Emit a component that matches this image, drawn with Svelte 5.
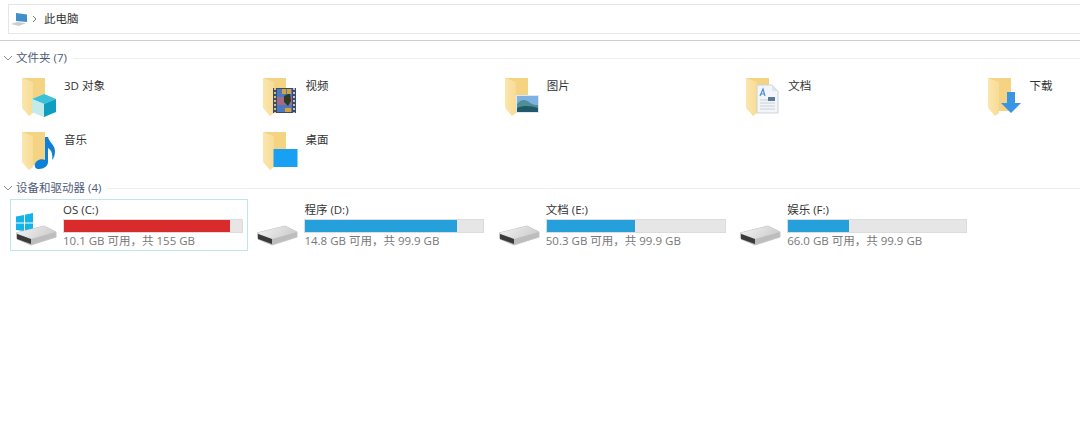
<script>
  const folders = [
    { name: "3D 对象", badge: "cube" },
    { name: "视频", badge: "film" },
    { name: "图片", badge: "photo" },
    { name: "文档", badge: "doc" },
    { name: "下载", badge: "down" },
    { name: "音乐", badge: "note" },
    { name: "桌面", badge: "desk" }
  ];

  const drives = [
    { name: "OS (C:)", free: "10.1 GB 可用，共 155 GB", used: 93.5, low: true, system: true },
    { name: "程序 (D:)", free: "14.8 GB 可用，共 99.9 GB", used: 85.2 },
    { name: "文档 (E:)", free: "50.3 GB 可用，共 99.9 GB", used: 49.6 },
    { name: "娱乐 (F:)", free: "66.0 GB 可用，共 99.9 GB", used: 33.9 }
  ];
</script>

{#snippet chevron()}
  <svg class="chevron" width="10" height="7" viewBox="0 0 10 7">
    <path d="M1 1l4 4 4-4" fill="none" stroke="#8a8f98" stroke-width="1" />
  </svg>
{/snippet}

{#snippet folderIcon(badge)}
  <svg class="folder" width="42" height="47" viewBox="0 0 42 47">
    <defs>
      <linearGradient id="leaf" x1="0" y1="0" x2="1" y2="0">
        <stop offset="0" stop-color="#fbe6ae" />
        <stop offset="1" stop-color="#f8dc96" />
      </linearGradient>
    </defs>
    <g transform="translate(0 4)">
      <path d="M0 1H23V34H6L0 30Z" fill="#f4d382" />
      <path d="M0 1L11 5V36L7 39 0 31Z" fill="url(#leaf)" />

      {#if badge === "cube"}
        <path d="M22 17l12 5v13l-12 5-12-5V22Z" fill="#d5f0ee" />
        <path d="M10 22l12-5 12 5-12 5Z" fill="#3cc2d8" />
        <path d="M22 27l12-5v13l-12 5Z" fill="#0f9dc0" />
        <path d="M10 22l12 5v13l-12-5Z" fill="#c4ebe8" />
      {:else if badge === "film"}
        <rect x="10" y="11" width="23" height="25" fill="#3d4a63" />
        <rect x="14" y="12" width="15" height="23" fill="#4a7ac4" />
        <rect x="14" y="20" width="15" height="8" fill="#a36a88" />
        <path d="M21 19l6-3 1 8-3 5-4-4Z" fill="#2c3a24" />
        <rect x="19" y="12" width="4" height="5" fill="#d9a13b" />
        <rect x="24" y="12" width="4" height="5" fill="#d9a13b" />
        <rect x="22" y="31" width="6" height="4" fill="#d9a13b" />
        <path d="M12 11v25" stroke="#d5c27c" stroke-width="2" stroke-dasharray="2 2" />
        <path d="M31 11v25" stroke="#b9c4d8" stroke-width="2" stroke-dasharray="2 2" />
      {:else if badge === "photo"}
        <rect x="11" y="18" width="23" height="18" fill="#dfe8ef" />
        <rect x="12" y="19" width="21" height="16" fill="#7fb2e4" />
        <path d="M12 27c4-5 8-5 12-2s6 3 9 3v7H12Z" fill="#4f8f94" />
        <path d="M12 31c7-3 14-2 21 0v4H12Z" fill="#21586a" />
      {:else if badge === "doc"}
        <path d="M11 8h15l6 6v22H11Z" fill="#f3f5f9" stroke="#ccd2db" stroke-width="1" />
        <path d="M26 8v6h6Z" fill="#dfe3ea" />
        <path d="M14 19l3-7 2 7M15 17h3" fill="none" stroke="#4a8fd6" stroke-width="1.200" />
        <path d="M14 23h15M14 26h15M14 29h15M14 32h15" stroke="#c9d0da" stroke-width="1" />
        <rect x="22" y="20" width="7" height="4" fill="#5a7a96" />
      {:else if badge === "down"}
        <path d="M19 15h8v11h6L23 36 13 26h6Z" fill="#3a96e2" />
      {:else if badge === "note"}
        <path d="M23 6h3c1 5 7 8 7 14 0 4-1 7-3 9 1-4 0-10-4-12V31c0 4-4 7-9 7-3 0-5-2-4-5 1-4 7-6 10-4Z" fill="#0f80d8" />
      {:else if badge === "desk"}
        <rect x="10.500" y="18" width="24" height="18" fill="#1aa0f2" />
      {/if}
    </g>
  </svg>
{/snippet}

{#snippet driveIcon(system)}
  <svg class="disk" width="42" height="42" viewBox="0 0 42 42">
    <defs>
      <linearGradient id="top" x1="0" y1="0" x2="1" y2="0.300">
        <stop offset="0" stop-color="#f4f4f4" />
        <stop offset="1" stop-color="#cfcfcf" />
      </linearGradient>
    </defs>
    {#if system}
      <path d="M0 10.500l8-1.500v7.500H0Z M9 8.800L17 7v9.500H9Z M0 17.500h8V25L0 24Z M9 17.500h8V27L9 25.200Z" fill="#14b4ea" />
    {/if}
    <path d="M0 27L28 20l12 6v5L15 39 1 33Z" fill="#bdbdbd" stroke="#c4c4c4" stroke-width="1" stroke-linejoin="round" />
    <path d="M0 27L28 20l12 6-25 7Z" fill="url(#top)" />
    <path d="M1 28l14 5v5L1 33Z" fill="#3a3a3a" />
  </svg>
{/snippet}

<div class="explorer">
  <div class="address">
    <svg class="pc" width="16" height="13" viewBox="0 0 16 13">
      <path d="M5 0l11 1.500V9L5 8Z" fill="#3f8fc8" />
      <path d="M0 11l6-2 9 1-7 3Z" fill="#c9ced3" />
    </svg>
    <svg class="crumb" width="5" height="8" viewBox="0 0 5 8">
      <path d="M1 1l3 3-3 3" fill="none" stroke="#777" stroke-width="1" />
    </svg>
    <span>此电脑</span>
  </div>

  <div class="rule"></div>

  <div class="group-head first">
    {@render chevron()}
    <span>文件夹 (7)</span>
    <i></i>
  </div>
  <div class="folders">
    {#each folders as f}
      <div class="folder-item">
        {@render folderIcon(f.badge)}
        <span>{f.name}</span>
      </div>
    {/each}
  </div>

  <div class="group-head">
    {@render chevron()}
    <span>设备和驱动器 (4)</span>
    <i></i>
  </div>
  <div class="drives">
    {#each drives as d}
      <div class="drive" class:selected={d.system}>
        {@render driveIcon(d.system)}
        <div class="info">
          <div class="name">{d.name}</div>
          <div class="bar">
            <div class="fill" class:low={d.low} style="width: {d.used}%"></div>
          </div>
          <div class="free">{d.free}</div>
        </div>
      </div>
    {/each}
  </div>
</div>

<style>
  :global(body) {
    background: #fff;
  }

  .explorer {
    height: 421px;
    overflow: hidden;
    font-family: "Open Sans", "Noto Sans CJK SC", sans-serif;
    font-size: 11.5px;
    line-height: 16px;
    color: #333;
  }

  .address {
    display: flex;
    align-items: center;
    height: 28px;
    margin: 4px 0 0 8px;
    padding-left: 2px;
    border: 1px solid #e6e6e6;
    border-right: none;
  }

  .pc {
    margin-right: 5px;
  }

  .crumb {
    margin-right: 7px;
  }

  .rule {
    height: 1px;
    margin-top: 6px;
    background: #cfcfcf;
  }

  .group-head {
    display: flex;
    align-items: center;
    height: 16px;
    padding-left: 3px;
    color: #4e5a78;
  }

  .group-head.first {
    margin-top: 9px;
  }

  .group-head span {
    margin-left: 3px;
  }

  .group-head i {
    flex: 1;
    height: 1px;
    margin-left: 6px;
    background: #eeeeee;
  }

  .folders {
    display: grid;
    grid-template-columns: repeat(5, 241.4px);
    grid-auto-rows: 54px;
    padding: 7px 0 0 22px;
    height: 114px;
    box-sizing: border-box;
  }

  .folder-item {
    display: flex;
    align-items: flex-start;
  }

  .folder-item span {
    margin-top: 5px;
  }

  .drives {
    display: grid;
    grid-template-columns: repeat(4, 241.4px);
    padding: 3px 0 0 10px;
  }

  .drive {
    display: flex;
    width: 238px;
    height: 52px;
    box-sizing: border-box;
    padding: 2px 4px 0 5px;
    border: 1px solid transparent;
  }

  .drive.selected {
    border-color: #bfe6e8;
  }

  .disk {
    flex: none;
    margin-top: 4px;
  }

  .info {
    flex: 1;
    margin-left: 5px;
  }

  .name {
    height: 16px;
  }

  .bar {
    height: 14px;
    margin-top: 1px;
    background: #e6e6e6;
    border: 1px solid #dcdcdc;
    box-sizing: border-box;
  }

  .fill {
    height: 100%;
    background: #26a0da;
  }

  .fill.low {
    background: #d92b2b;
  }

  .free {
    color: #777;
  }
</style>
